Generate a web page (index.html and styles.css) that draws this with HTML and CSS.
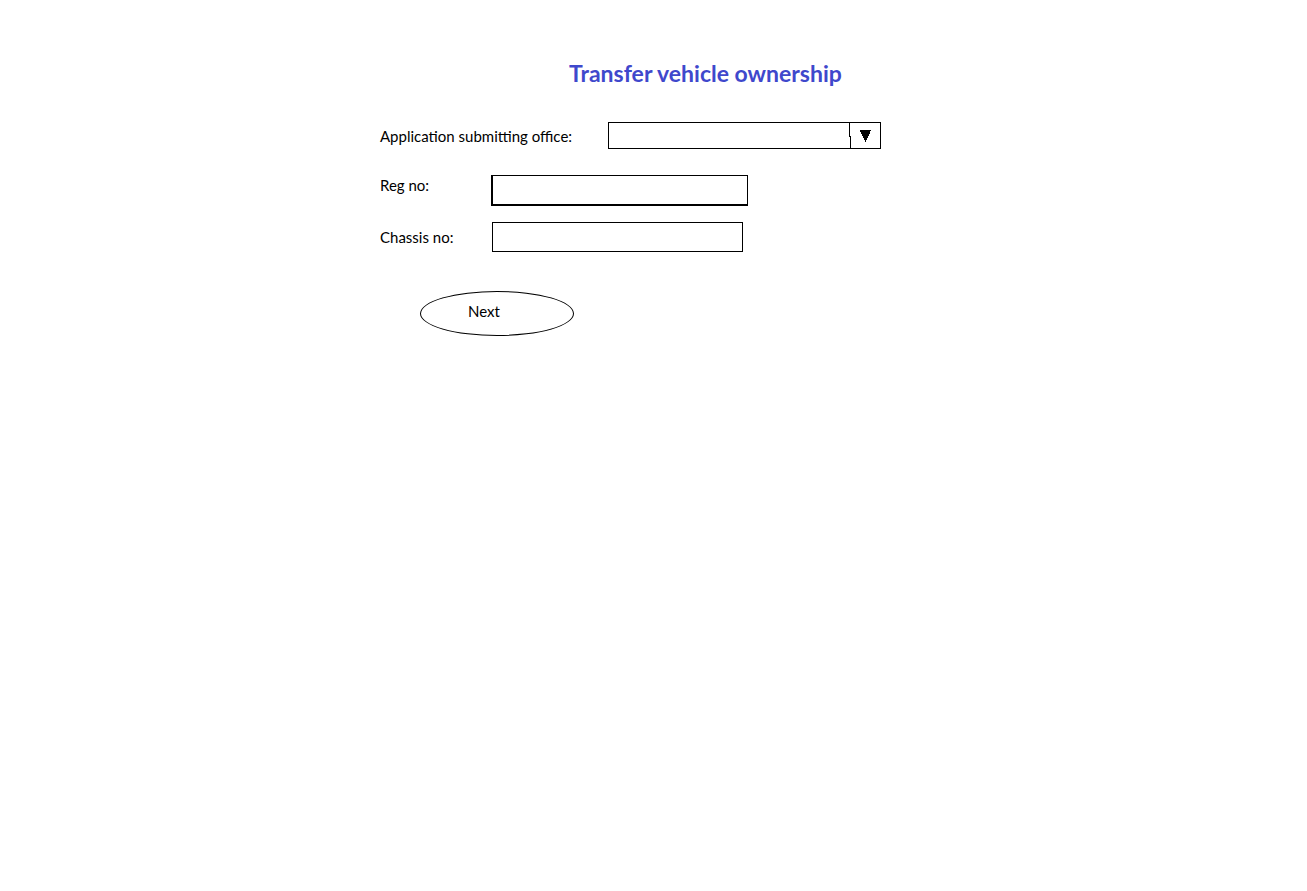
FILE: index.html
```html
<!DOCTYPE html>
<html lang="en">
<head>
<meta charset="utf-8">
<meta name="viewport" content="width=device-width, initial-scale=1">
<title>Transfer vehicle ownership</title>
<link rel="stylesheet" href="styles.css">
</head>
<body>
<main class="page">
  <h1 class="title">Transfer vehicle ownership</h1>
  <form class="form">
    <div class="row row-office">
      <label class="label" for="office">Application submitting office:</label>
      <div class="picker">
        <select class="field select" id="office"><option></option></select>
        <svg class="picker-arrow" width="32" height="27" viewBox="0 0 32 27" shape-rendering="crispEdges" aria-hidden="true">
          <path d="M0.5 0V14.5H1.5V27" fill="none" stroke="#000"/>
          <path d="M11 8H22V9H21V12H20V14H19V16H18V18H17V20H16V18H15V16H14V14H13V12H12V10H11Z" fill="#000"/>
        </svg>
      </div>
    </div>
    <div class="row row-reg">
      <label class="label" for="reg">Reg no:</label>
      <input class="field field-reg" id="reg" type="text">
    </div>
    <div class="row">
      <label class="label" for="chassis">Chassis no:</label>
      <input class="field field-chassis" id="chassis" type="text">
    </div>
    <button class="next" type="button">Next</button>
  </form>
</main>
</body>
</html>
```

FILE: styles.css
```css
* {
  box-sizing: border-box;
}

body {
  margin: 0;
  background: #fff;
  color: #000;
  font: 15px/20px Lato, Carlito, sans-serif;
}

.page {
  padding: 58px 24px 24px 380px;
}

.title {
  margin: 0 0 34px 189px;
  color: #3f48cc;
  font-size: 23px;
  line-height: 30px;
  font-weight: 700;
}

.form {
  display: flex;
  flex-direction: column;
  align-items: flex-start;
}

.row {
  display: grid;
  grid-template-columns: 112px auto;
  align-items: center;
  margin-bottom: 16px;
}

.row-office {
  grid-template-columns: 228px auto;
  margin-bottom: 26px;
}

.row-reg {
  grid-template-columns: 111px auto;
  align-items: start;
}

.label {
  white-space: nowrap;
}

.field {
  display: block;
  width: 251px;
  height: 30px;
  margin: 0;
  padding: 0 8px;
  border: 1px solid #000;
  border-radius: 0;
  background: #fff;
  color: inherit;
  font: inherit;
}

.picker {
  position: relative;
}

.select {
  width: 273px;
  height: 27px;
  padding-right: 40px;
  appearance: none;
}

.picker-arrow {
  position: absolute;
  top: 0;
  right: 0;
  pointer-events: none;
}

.field-reg {
  width: 257px;
  height: 31px;
  border-width: 1px 1px 2px 2px;
}

.next {
  width: 154px;
  height: 45px;
  margin: 23px 0 0 40px;
  padding: 0 26px 6px 0;
  border: 1px solid #000;
  border-radius: 50%;
  background: #fff;
  color: inherit;
  font: inherit;
}
```
